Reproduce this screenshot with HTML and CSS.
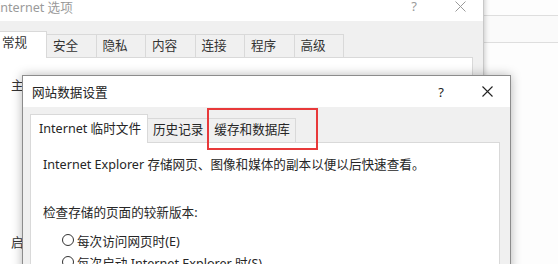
FILE: index.html
```html
<!DOCTYPE html>
<html lang="zh-CN">
<head>
<meta charset="utf-8">
<title>网站数据设置</title>
<link rel="stylesheet" href="styles.css">
</head>
<body>
<div class="far"></div>

<div class="win win-back">
  <div class="titlebar">
    <span class="title">Internet 选项</span>
    <span class="tb-btn help">?</span>
    <span class="tb-btn close"><svg width="11" height="11" viewBox="0 0 11 11"><path d="M0.5 0.5L10.5 10.5M10.5 0.5L0.5 10.5" stroke="currentColor" stroke-width="1" fill="none"/></svg></span>
  </div>
  <div class="tabs">
    <div class="tab active">常规</div>
    <div class="tab">安全</div>
    <div class="tab">隐私</div>
    <div class="tab">内容</div>
    <div class="tab">连接</div>
    <div class="tab">程序</div>
    <div class="tab">高级</div>
  </div>
  <div class="panel">
    <p class="line">主页</p>
    <p class="line start">启动</p>
  </div>
</div>

<div class="win win-front">
  <div class="titlebar">
    <span class="title">网站数据设置</span>
    <span class="tb-btn help">?</span>
    <span class="tb-btn close"><svg width="11" height="11" viewBox="0 0 11 11"><path d="M0.5 0.5L10.5 10.5M10.5 0.5L0.5 10.5" stroke="currentColor" stroke-width="1.1" fill="none"/></svg></span>
  </div>
  <div class="tabs">
    <div class="tab active">Internet 临时文件</div>
    <div class="tab">历史记录</div>
    <div class="tab">缓存和数据库</div>
  </div>
  <div class="panel">
    <p class="line">Internet Explorer 存储网页、图像和媒体的副本以便以后快速查看。</p>
    <p class="line check">检查存储的页面的较新版本:</p>
    <div class="radio first"><span class="circle"></span><span>每次访问网页时(E)</span></div>
    <div class="radio"><span class="circle"></span><span>每次启动 Internet Explorer 时(S)</span></div>
  </div>
</div>

<div class="highlight"></div>
</body>
</html>
```
FILE: styles.css
```css
* { box-sizing: border-box; margin: 0; padding: 0; }
html, body { width: 558px; height: 264px; overflow: hidden; }
body {
  position: relative;
  background: #fdfdfd;
  font-family: "Noto Sans", "Noto Sans CJK SC", sans-serif;
  font-size: 12.6px;
  color: #262626;
}

.far {
  position: absolute;
  left: 470px; top: 15px;
  width: 120px; height: 28px;
  border-top: 1px solid #dedede;
  border-bottom: 1px solid #dedede;
  background: #fafafa;
}

.win { position: absolute; display: flex; flex-direction: column; background: #f0f0f0; }

.titlebar { display: flex; align-items: center; background: #fff; flex: none; }
.title { flex: 1; white-space: nowrap; }
.tb-btn { width: 46px; height: 100%; display: flex; align-items: center; justify-content: center; }
.help { font-size: 13px; }

.tabs { display: flex; align-items: flex-end; flex: none; position: relative; z-index: 1; }
.tab {
  background: #f0f0f0;
  border: 1px solid #d9d9d9;
  border-left: none;
  border-bottom: none;
  white-space: nowrap;
}
.tab.active {
  background: #fff;
  border-left: 1px solid #d9d9d9;
  margin-bottom: -1px;
}
.panel { flex: 1; background: #fff; border: 1px solid #d9d9d9; }
.line { line-height: 20px; white-space: nowrap; }

/* back window */
.win-back {
  left: -14px; top: -9px;
  width: 498px; height: 300px;
  box-shadow: 1px 0 5px rgba(0,0,0,.2);
  border-right: 1px solid #c8c8c8;
}
.win-back .titlebar { height: 30px; color: #9a9a9a; }
.win-back .title { padding-left: 10px; }
.win-back .tabs { padding: 10px 0 0 9px; }
.win-back .tab { width: 49.5px; height: 23px; padding-left: 6px; line-height: 22px; color: #333; }
.win-back .tab.active { width: 52px; height: 27px; }
.win-back .panel { margin: 0 10px 0 12px; padding: 18px 12px; color: #333; }
.win-back .start { margin-top: 137px; }

/* front dialog */
.win-front {
  left: 22px; top: 75px;
  width: 489px; height: 220px;
  border: 1px solid #8c8c8c;
  box-shadow: 0 0 10px rgba(0,0,0,.28);
  z-index: 2;
}
.win-front .titlebar { height: 31px; color: #222; }
.win-front .title { padding-left: 9px; }
.win-front .tabs { padding: 7px 0 0 7px; }
.win-front .tab { height: 24px; padding: 0 5px; line-height: 22px; }
.win-front .tab.active { height: 29px; padding: 0 6px 0 8px; line-height: 27px; }
.win-front .panel { margin: 0 10px 0 7px; padding: 12px 12px; }
.win-front .check { margin-top: 28px; }

.radio { display: flex; align-items: center; height: 22px; padding-left: 19px; white-space: nowrap; }
.radio.first { margin-top: 6px; }
.circle {
  width: 12px; height: 12px;
  border: 1px solid #333;
  border-radius: 50%;
  margin-right: 3px;
  flex: none;
  background: #fff;
}

.highlight {
  position: absolute;
  left: 207px; top: 108px;
  width: 111px; height: 42px;
  border: 2px solid #e8393a;
  z-index: 5;
}
```
